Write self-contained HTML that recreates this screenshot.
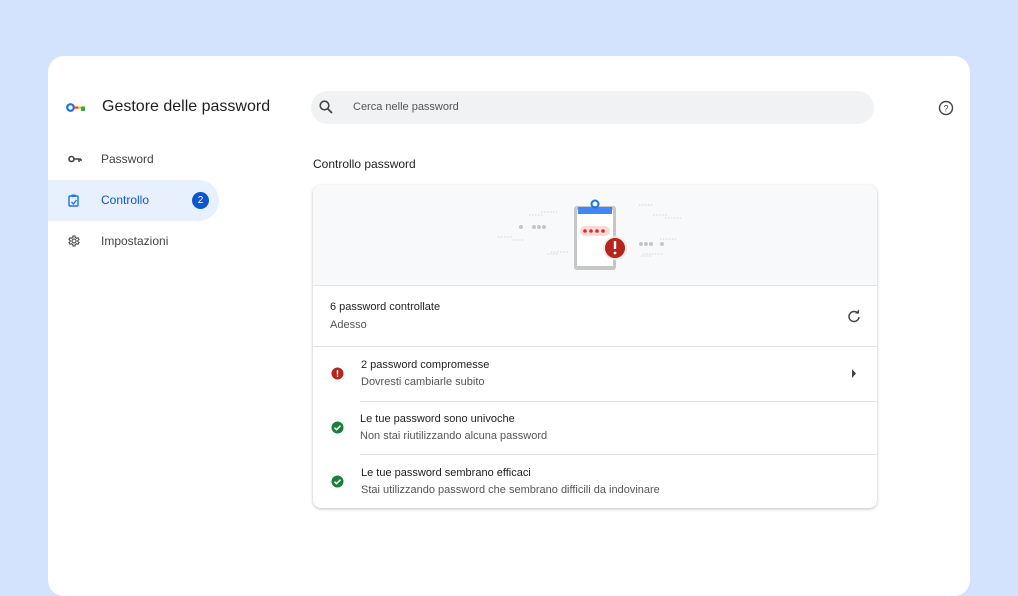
<!DOCTYPE html><html><head><style>
body{margin:0;width:1018px;height:573px;background:#d3e3fd;font-family:"Liberation Sans",sans-serif;overflow:hidden;position:relative;color:#1f1f1f}
.win{position:absolute;left:48px;top:56px;width:922px;height:540px;background:#fff;border-radius:16px}
.a{position:absolute}
.nav{font-size:12px;color:#444}
.card{position:absolute;left:313px;top:185px;width:564px;height:323px;border-radius:8px;box-shadow:0 1px 3px rgba(0,0,0,.25);background:#fff;overflow:hidden}
.t1{font-size:11px;color:#1f1f1f}.t2{font-size:11px;color:#555}
</style></head><body><div class="win"></div>
<svg class="a" style="left:66px;top:102px" width="20" height="11"><circle cx="4.5" cy="5.5" r="3.3" fill="none" stroke="#1a73e8" stroke-width="2.2"/><rect x="8" y="4.5" width="5" height="2.2" fill="#ea4335"/><rect x="12" y="4.5" width="3" height="2.2" fill="#fbbc04"/><rect x="15" y="4.5" width="4" height="2.2" fill="#34a853"/><rect x="15" y="6.5" width="4" height="2.5" fill="#34a853"/></svg>
<div class="a" style="left:102px;top:98px;font-size:16px;color:#1f1f1f">Gestore delle password</div>
<svg class="a" style="left:68px;top:154px" width="14" height="10"><circle cx="3.5" cy="5" r="2.5" fill="none" stroke="#444" stroke-width="1.6"/><path d="M6 5h7M11 5v3M13 5v2" stroke="#444" stroke-width="1.6"/></svg>
<div class="a nav" style="left:101px;top:152px">Password</div>
<div class="a" style="left:48px;top:180px;width:171px;height:41px;background:#e8f0fe;border-radius:0 21px 21px 0"></div>
<svg class="a" style="left:68px;top:194px" width="12" height="13"><rect x="1" y="2" width="9" height="10" rx="1" fill="none" stroke="#1a73e8" stroke-width="1.4"/><rect x="3.5" y="0.5" width="4" height="2.5" fill="#1a73e8"/><path d="M3.5 8l2 2 3-4" stroke="#1a73e8" fill="none" stroke-width="1.3"/></svg>
<div class="a nav" style="left:101px;top:193px;color:#0b57d0">Controllo</div>
<div class="a" style="left:192px;top:192px;width:17px;height:17px;border-radius:50%;background:#0b57d0;color:#fff;font-size:10px;text-align:center;line-height:17px">2</div>
<svg class="a" style="left:68px;top:235px" width="12" height="12" viewBox="0 0 24 24"><path d="M12 8a4 4 0 100 8 4 4 0 000-8zM10 2h4l.5 3 2.5 1.5 3-1 2 3.5-2.3 2v2l2.3 2-2 3.5-3-1-2.5 1.5-.5 3h-4l-.5-3L7 17.5l-3 1-2-3.5 2.3-2v-2L2 9l2-3.5 3 1L9.5 5z" fill="none" stroke="#444" stroke-width="2.2"/></svg>
<div class="a nav" style="left:101px;top:234px">Impostazioni</div>
<div class="a" style="left:311px;top:91px;width:563px;height:33px;border-radius:17px;background:#f0f2f4"></div>
<svg class="a" style="left:319px;top:100px" width="14" height="14"><circle cx="5.5" cy="5.5" r="4.3" fill="none" stroke="#444" stroke-width="1.6"/><path d="M8.5 8.5l4.5 4.5" stroke="#444" stroke-width="1.8"/></svg>
<div class="a" style="left:353px;top:101px;font-size:11px;color:#555">Cerca nelle password</div>
<svg class="a" style="left:938px;top:100px" width="16" height="16"><circle cx="8" cy="8" r="6.5" fill="none" stroke="#444" stroke-width="1.4"/><text x="8" y="11.5" font-size="9" text-anchor="middle" fill="#444" font-family="Liberation Sans">?</text></svg>
<div class="a" style="left:313px;top:157px;font-size:12px">Controllo password</div>
<div class="card">
<div class="a" style="left:0;top:0;width:564px;height:100px;background:#f8f9fa;border-bottom:1px solid #e3e3e3"></div>
<svg class="a" style="left:180px;top:10px" width="220" height="80"><g fill="#c4c7c5"><circle cx="28" cy="32" r="2"/><circle cx="41" cy="32" r="2"/><circle cx="46" cy="32" r="2"/><circle cx="51" cy="32" r="2"/><circle cx="148" cy="49" r="2"/><circle cx="153" cy="49" r="2"/><circle cx="158" cy="49" r="2"/><circle cx="169" cy="49" r="2"/></g>
<g stroke="#d0d3d6" stroke-width="1" stroke-dasharray="1.5 1.5"><path d="M48 17h16M36 20h14M5 42h14M20 45h12M58 57h18M54 59h12M146 10h14M160 20h14M172 23h16M167 44h16M150 59h20M148 61h12"/></g>
<rect x="81" y="11" width="42" height="64" rx="3" fill="#c4c7c5"/><rect x="84" y="15" width="36" height="56" fill="#fff"/><rect x="85" y="12" width="34" height="7" fill="#4285f4"/><circle cx="102" cy="9" r="3.5" fill="none" stroke="#1a73e8" stroke-width="2"/>
<rect x="87" y="31" width="30" height="10" rx="5" fill="#fadad7"/><g fill="#d93025"><circle cx="92" cy="36" r="1.8"/><circle cx="98" cy="36" r="1.8"/><circle cx="104" cy="36" r="1.8"/><circle cx="110" cy="36" r="1.8"/></g>
<circle cx="122" cy="53" r="11" fill="#b3261e" stroke="#fce8e6" stroke-width="2"/><rect x="120.8" y="46" width="2.4" height="8" fill="#fff"/><circle cx="122" cy="58" r="1.4" fill="#fff"/></svg>
<div class="a t1" style="left:17px;top:116px">6 password controllate</div><div class="a t2" style="left:17px;top:134px">Adesso</div>
<svg class="a" style="left:534px;top:124px" width="14" height="14"><path d="M11 4.5A5 5 0 1012 8" fill="none" stroke="#444" stroke-width="1.5"/><path d="M8 4.5h4v-4z" fill="#444"/></svg>
<div class="a" style="left:0;top:161px;width:564px;border-top:1px solid #e3e3e3"></div>
<svg class="a" style="left:18px;top:182px" width="13" height="13"><circle cx="6.5" cy="6.5" r="6" fill="#b3261e"/><rect x="5.8" y="3" width="1.4" height="4.5" fill="#fff"/><rect x="5.8" y="8.5" width="1.4" height="1.4" fill="#fff"/></svg>
<div class="a t1" style="left:48px;top:174px">2 password compromesse</div><div class="a t2" style="left:48px;top:191px">Dovresti cambiarle subito</div>
<svg class="a" style="left:538px;top:184px" width="6" height="9"><path d="M1 0l4 4.5-4 4.5z" fill="#444"/></svg>
<div class="a" style="left:47px;top:216px;width:517px;border-top:1px solid #e3e3e3"></div>
<svg class="a" style="left:18px;top:236px" width="13" height="13"><circle cx="6.5" cy="6.5" r="6" fill="#188038"/><path d="M3.5 6.7l2 2 4-4" stroke="#fff" fill="none" stroke-width="1.5"/></svg>
<div class="a t1" style="left:47px;top:228px">Le tue password sono univoche</div><div class="a t2" style="left:47px;top:245px">Non stai riutilizzando alcuna password</div>
<div class="a" style="left:47px;top:269px;width:517px;border-top:1px solid #e3e3e3"></div>
<svg class="a" style="left:18px;top:290px" width="13" height="13"><circle cx="6.5" cy="6.5" r="6" fill="#188038"/><path d="M3.5 6.7l2 2 4-4" stroke="#fff" fill="none" stroke-width="1.5"/></svg>
<div class="a t1" style="left:48px;top:282px">Le tue password sembrano efficaci</div><div class="a t2" style="left:48px;top:299px">Stai utilizzando password che sembrano difficili da indovinare</div>
</div></body></html>
